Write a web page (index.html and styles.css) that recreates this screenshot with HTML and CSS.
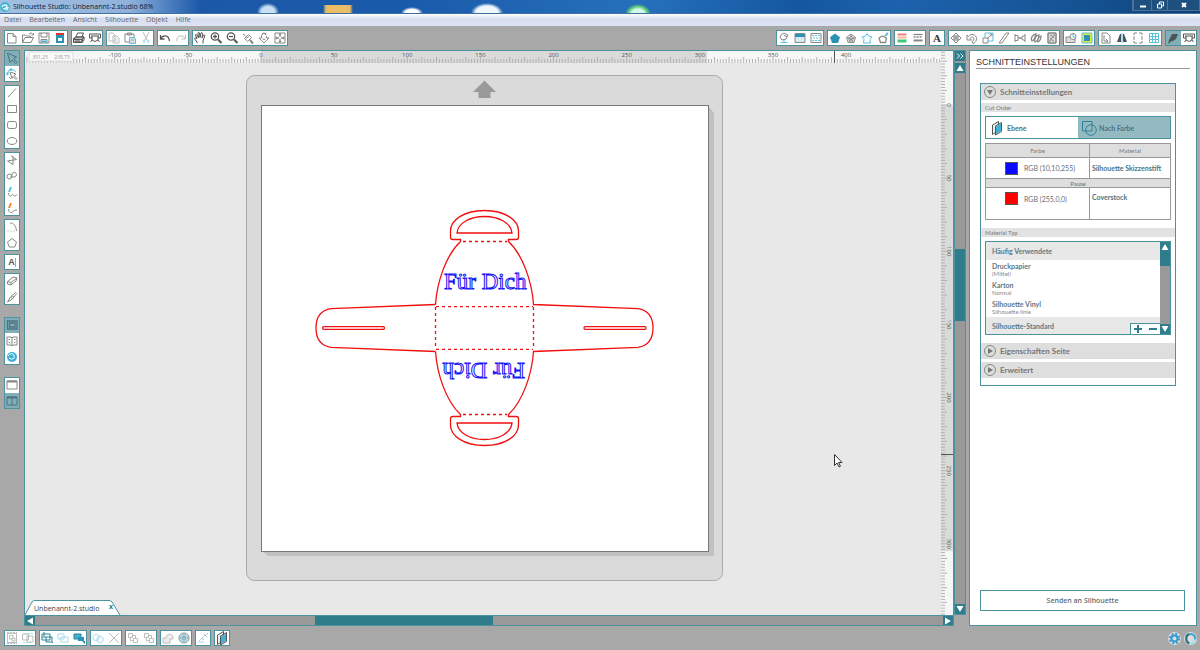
FILE: index.html
```html
<!DOCTYPE html>
<html lang="de">
<head>
    <meta charset="UTF-8">
    <meta name="viewport" content="width=device-width, initial-scale=1.0">
    <title>Silhouette Studio: Unbenannt-2.studio</title>
    <link rel="stylesheet" href="styles.css">
</head>
<body>
    <!-- icon set, 16x16 each -->
    <svg class="sprite" aria-hidden="true">
        <symbol id="new" viewBox="0 0 16 16"><path d="M3.500 3.500h5.500l3 3v6.500H3.500zM9 3.500v3h3"/></symbol>
        <symbol id="open" viewBox="0 0 16 16"><path d="M2.500 12.500V5h3l1 1h4v2M2.500 12.500l2.500-5h8.500l-2.500 5zM9 4c1.500-1.500 3-1 4 .5M13.500 3v2h-2"/></symbol>
        <symbol id="save" viewBox="0 0 16 16"><path d="M3 3h10v10H3zM5 3v4h6V3M5 13V9.500h6V13"/><path class="fill-blue" d="M5.500 10.500h5v2h-5z"/></symbol>
        <symbol id="card" viewBox="0 0 16 16"><path class="fill-teal" d="M4 3h8v10H4z"/><path class="fill-red" d="M4 3h8v2H4z"/><path class="fill-white" d="M6 8h4v3H6z"/></symbol>
        <symbol id="print" viewBox="0 0 16 16"><path class="fill-light" d="M2.500 9l2-2h8.500l-1.500 2.500v2.500h-9z"/><path d="M5 7l1.500-4h6L11 7M2.500 9l2-2h8.500l-2 2.500zM2.500 9.500h8.500v3H2.500zM13 7v3l-2 2.500M4 11h5"/></symbol>
        <symbol id="cutter" viewBox="0 0 16 16"><path d="M2.500 4h11v4H11M2.500 4v4H5M4 6h8M5 6v4l3 1.500 3-1.500V6M11 10l1.500 2M5 10l-1.500 2"/></symbol>
        <symbol id="copy" viewBox="0 0 16 16"><path d="M3 3h4l2 2v6H3zM7 6h4l2 2v5H7z"/><path class="line-blue" d="M8.500 9h3M8.500 11h3"/></symbol>
        <symbol id="paste" viewBox="0 0 16 16"><path d="M3 4h9v3M3 4v8h4M5.500 5V3h4v2z"/><path class="fill-light line-blue" d="M7.500 7.500h5l1 1.500v4.500h-6zM9 10h3"/></symbol>
        <symbol id="scissors" viewBox="0 0 16 16"><path d="M5 2l4 8M11 2L7 10"/><path class="line-blue" d="M7 10a1.500 1.500 0 1 0-1 3zM9 10a1.500 1.500 0 1 1 1 3z"/></symbol>
        <symbol id="undo" viewBox="0 0 16 16"><path class="strong" d="M3.500 5v4h4M3.500 9c2-4 8-5 9 2"/></symbol>
        <symbol id="redo" viewBox="0 0 16 16"><path d="M12.500 5v4h-4M12.500 9c-2-4-8-5-9 2"/></symbol>
        <symbol id="hand" viewBox="0 0 16 16"><path d="M5.500 13L2.500 8.500c0-1 1-1 2.500.5L3.500 5c0-1 1-1 1.500 0l1.500 3-.5-5c.5-1 1.200-.8 1.500 0L8 7.500l1-4.500c.5-.8 1.500-.5 1.500.5L10 8l1.500-3c.7-.6 1.500 0 1.200 1L11 11v2.500"/></symbol>
        <symbol id="zoomin" viewBox="0 0 16 16"><circle class="strong" cx="7" cy="6.500" r="3.700"/><path class="strong" d="M5 6.500h4M7 4.500v4"/><path class="thick" d="M10 9.500l3.500 3.500"/></symbol>
        <symbol id="zoomout" viewBox="0 0 16 16"><circle class="strong" cx="7" cy="6.500" r="3.700"/><path class="strong" d="M5 6.500h4"/><path class="thick" d="M10 9.500l3.500 3.500"/></symbol>
        <symbol id="zoomsel" viewBox="0 0 16 16"><path d="M3 4l2.500 2M4.500 8.500l4-4 3 3-4 4zM6 8.500l3-2"/><path class="thick" d="M10 10l3 3.500"/></symbol>
        <symbol id="zoomdrag" viewBox="0 0 16 16"><path d="M5.500 8V6a3 3 0 0 1 5-2M3 8h2.500M3 8l5 5 5-5h-2.500V6M6 4l2-1 2 2M7 8.500L8 10l1-1.500"/></symbol>
        <symbol id="fit" viewBox="0 0 16 16"><path d="M3 3h10v10H3z"/><path class="strong" d="M8 4v3M8 9v3M4 8h3M9 8h3M7 5l1-1 1 1M7 11l1 1 1-1M5 7L4 8l1 1M11 7l1 1-1 1"/></symbol>

        <symbol id="fillset" viewBox="0 0 16 16"><path d="M5 5l3-2 4 2-2 4-4 1-2-3zM8 5.500l3 1"/><path class="line-blue" d="M8 10v2M4.500 12.500h7"/></symbol>
        <symbol id="gradient" viewBox="0 0 16 16"><path class="fill-pale" d="M3 4h10v8H3z"/><path class="fill-teal" d="M3 4h10v3H3z"/><path d="M3 3.500h10v9H3z"/></symbol>
        <symbol id="pattern" viewBox="0 0 16 16"><path d="M3 3.500h10v9H3z"/><path class="line-blue dotted" d="M4 5.500h8M5 8h7M4 10.500h8"/></symbol>
        <symbol id="pentafill" viewBox="0 0 16 16"><path class="fill-teal" d="M8 3.500l5 3.800-2 5.700H5L3 7.300z"/></symbol>
        <symbol id="pentaline" viewBox="0 0 16 16"><path d="M8 4l4.500 3.500-1.700 5H5.200l-1.700-5zM8 6l2.500 2-1 3h-3l-1-3zM8 4v4M3.500 7.500L8 9l4.500-1.500M5.200 12.500L8 9l2.800 3.500"/></symbol>
        <symbol id="pentablue" viewBox="0 0 16 16"><path class="line-blue" d="M8 3.500l1.500 2.500 3.500 1-2 2.500.5 3.500H4.500L5 9.500 3 7l3.500-1z"/></symbol>
        <symbol id="pentapen" viewBox="0 0 16 16"><path class="strong" d="M7.500 6l4 2-1 4.500h-5L4 8z"/><path class="line-blue thick" d="M10 6l3-3"/></symbol>
        <symbol id="linecolor" viewBox="0 0 16 16"><path class="bar-red" d="M3.500 4.500h9"/><path class="bar-orange" d="M3.500 7.500h9"/><path class="bar-green" d="M3.500 11h9"/></symbol>
        <symbol id="linestyle" viewBox="0 0 16 16"><path class="strong" d="M3.500 4.500h9"/><path class="strong dotted" d="M3.500 7h9"/><path class="thick" d="M3.500 10.500h9"/></symbol>
        <symbol id="move" viewBox="0 0 16 16"><path d="M6 5l2-2 2 2v1H6zM6 11l2 2 2-2v-1H6zM5 6L3 8l2 2h1V6zM11 6l2 2-2 2h-1V6zM7 7h2v2H7z"/></symbol>
        <symbol id="rotate" viewBox="0 0 16 16"><path d="M3 5v5h4.500L6 8.500c1-2 4-2 4 .5 0 2-2 2.500-2 2.500l1 2c5-2 4.500-8 0-9C7.500 4 5.500 5 4.500 6.500z"/></symbol>
        <symbol id="scale" viewBox="0 0 16 16"><path d="M3 8h5v5H3zM8 8l4-4M9.500 4H12v2.500"/><path class="line-blue" d="M5 8V3h8v8H8"/></symbol>
        <symbol id="shear" viewBox="0 0 16 16"><path d="M3 13l7-10h3L6 13z"/></symbol>
        <symbol id="align" viewBox="0 0 16 16"><path d="M3 4v8M3 5.500h3v5H3M13 4v8M13 5.500l-3 1v3l3 1M8 7v2M6 8h4"/></symbol>
        <symbol id="replicate" viewBox="0 0 16 16"><path class="strong" d="M4 11c-2-3 1-7 4-7-1 3-1 6-4 7zM7 12c-1-3 1-7 4-7 0 3-1 6-4 7zM10 12c-1-2 0-5 3-6 0 3-1 5-3 6z"/></symbol>
        <symbol id="nest" viewBox="0 0 16 16"><path class="fill-light" d="M4 3h8v10H4z"/><path d="M4 3h8v10H4zM6 5l4 2-4 2 4 2M10 4v2M6 10v2"/></symbol>
        <symbol id="modify" viewBox="0 0 16 16"><path class="fill-light" d="M3 7h9v5.500H3z"/><circle class="fill-white-line" cx="10" cy="6.500" r="3"/><path class="line-blue" d="M10 4v3h2"/></symbol>
        <symbol id="offset" viewBox="0 0 16 16"><path class="fill-lime" d="M3 3h10v10H3z"/><path class="fill-teal" d="M5 5h6v6H5z"/><path class="line-blue" d="M3 3h10v10H3z"/></symbol>
        <symbol id="page" viewBox="0 0 16 16"><path d="M4 3h5l3 3v7H4zM6 5v6h4M8 9l2 2-2 1"/></symbol>
        <symbol id="mirror" viewBox="0 0 16 16"><path class="fill-dark" d="M3 12l3-8h1v8zM13 12l-3-8H9v8z"/><path class="line-blue" d="M8 3v10"/></symbol>
        <symbol id="marks" viewBox="0 0 16 16"><path d="M4 5V3h3M9 3h3v2M4 11v2h3M9 13h3v-2M4 6v4M12 6v4"/></symbol>
        <symbol id="grid" viewBox="0 0 16 16"><path class="line-blue" d="M3.500 3.500h9v9h-9zM6.500 3.500v9M9.500 3.500v9M3.500 6.500h9M3.500 9.500h9"/></symbol>
        <symbol id="blade" viewBox="0 0 16 16"><path class="fill-dark" d="M4 10l3-6h6l-2 5-3 2-2 .5-3 2.500z"/></symbol>

        <symbol id="arrow" viewBox="0 0 16 16"><path d="M3.500 3l9 4-3 1.500 3.500 4-1.500 1L8 10l-2 2.500z"/></symbol>
        <symbol id="nodes" viewBox="0 0 16 16"><path class="line-blue thick" d="M3 9l1-3M6 4l2-1"/><path class="line-blue" d="M3 8l2-4h5l2 2"/><path d="M6 6l6 2-2 1.500 3 3-1 1-3-3-1 2zM5 11l2 2"/></symbol>
        <symbol id="line" viewBox="0 0 16 16"><path d="M4 12l8-8.500"/></symbol>
        <symbol id="rect" viewBox="0 0 16 16"><path d="M3.500 4.500h9v7h-9z"/></symbol>
        <symbol id="round" viewBox="0 0 16 16"><rect x="3.500" y="4.500" width="9" height="7" rx="2"/></symbol>
        <symbol id="ellipse" viewBox="0 0 16 16"><ellipse cx="8" cy="8" rx="4.800" ry="3.500"/></symbol>
        <symbol id="polygon" viewBox="0 0 16 16"><path d="M7 3.500l5.500 4-9 1.500 5.500 3.500V5"/></symbol>
        <symbol id="curve" viewBox="0 0 16 16"><path d="M8 8a2.500 2.500 0 1 0-2.500 3C8 11 8 8 8 6a2.300 2.300 0 1 1 2.500 3H6"/></symbol>
        <symbol id="freehand" viewBox="0 0 16 16"><path class="line-blue thick" d="M7 3L5 8"/><path d="M4.500 9c0 3 2 4 3 2.500s2-1 2.500 0 2 0 3-1"/></symbol>
        <symbol id="smooth" viewBox="0 0 16 16"><path class="line-orange thick" d="M7 3L5 8"/><path d="M4.500 9c0 4 3 4 4.500 2.500S11 10 13 10"/></symbol>
        <symbol id="arc" viewBox="0 0 16 16"><path d="M6 4c4 0 6 3 6.500 8"/><path class="faint dotted" d="M3 12h9"/></symbol>
        <symbol id="penta" viewBox="0 0 16 16"><path d="M8 3.500l4.500 3.500-1.700 5H5.200L3.500 7z"/></symbol>
        <symbol id="eraser" viewBox="0 0 16 16"><path d="M3.500 8.500L9 4l4 1-1 3-5 4-3.500-1zM3.500 8.500L7 9.500 13 5M7 9.500V12"/></symbol>
        <symbol id="knife" viewBox="0 0 16 16"><path d="M3.500 13l3-5 5-4.500 1 1-4 5.500zM6.500 8l2 1.500M8 7l2 1"/></symbol>
        <symbol id="screen" viewBox="0 0 16 16"><path class="strong" d="M3.500 4h9.500v8H3.500zM5.500 6h5.500v4H5.500z"/></symbol>
        <symbol id="library" viewBox="0 0 16 16"><path d="M3 4h4l1 1 1-1h4v8H9l-1 1-1-1H3zM8 5v8M4.500 6.500H6M10 6.500h1.500M4.500 9l2 1M10 10l1.500-1"/></symbol>
        <symbol id="store" viewBox="0 0 16 16"><circle class="fill-blue" cx="8" cy="8" r="5"/><path class="line-white" d="M4 7c2-3 6-3 6 0M5 9c3 2 6 1 5-2"/></symbol>
        <symbol id="window" viewBox="0 0 16 16"><path d="M3 4h10v8H3z"/><path class="thick" d="M3 4.500h10"/></symbol>
        <symbol id="split" viewBox="0 0 16 16"><path d="M3 4h10v8H3zM8 4v8"/><path class="thick" d="M3 4.500h10"/></symbol>

        <symbol id="group" viewBox="0 0 16 16"><path d="M3.500 3.500h9v9h-9zM5.500 5.500H9V9H5.500zM8 8h3v3H8z"/><path class="dotted thick" d="M3 3h10M3 13h10"/></symbol>
        <symbol id="ungroup" viewBox="0 0 16 16"><path d="M2.500 4h6v6h-6zM7 6h6v6H7z"/><path class="line-blue dotted" d="M5 3.500h8M3 12.500h8"/></symbol>
        <symbol id="selectall" viewBox="0 0 16 16"><path class="line-teal" d="M3 4h8v6H3zM7 7h6v5H7zM5 2v4M3 7h4M13 12l1 1"/></symbol>
        <symbol id="deselect" viewBox="0 0 16 16"><path class="line-blue" d="M3 4h6v5H3zM6 7h7v5H6z"/></symbol>
        <symbol id="selectcolor" viewBox="0 0 16 16"><path class="fill-blue" d="M3 4h7v5H3z"/><path class="line-teal" d="M3 4h7v5H3z"/><path class="fill-teal" d="M7 7h6v4H7zM11 11h3v3z"/></symbol>
        <symbol id="duplicate" viewBox="0 0 16 16"><path class="line-blue" d="M3 6l3-2 3 2v3l-3 2-3-2zM7 8l3-2 3 2v3l-3 2-3-2z"/></symbol>
        <symbol id="delete" viewBox="0 0 16 16"><path d="M3 3l10 10M13 3L3 13"/></symbol>
        <symbol id="front" viewBox="0 0 16 16"><path d="M3.500 3.500h4v4h-4zM8.500 8.500h4v4h-4zM7.500 5.500h3v3M5.500 7.500v3h3"/></symbol>
        <symbol id="weld" viewBox="0 0 16 16"><path class="fill-light" d="M3 8h3c0-5 7-5 7 0v1h-3v4H3z"/></symbol>
        <symbol id="target" viewBox="0 0 16 16"><circle cx="8" cy="8" r="5"/><circle class="line-blue" cx="8" cy="8" r="3.500"/><circle cx="8" cy="8" r="2"/><circle class="fill-blue" cx="8" cy="8" r="1"/></symbol>
        <symbol id="dropper" viewBox="0 0 16 16"><path class="line-blue" d="M3 12h6M4 11l6-6"/><path d="M9 4l3 3M10 6l3-3M6 8l3 2"/></symbol>
        <symbol id="layers" viewBox="0 0 16 16"><path class="paper" d="M3.500 5l6-3.500v9l-6 4z"/><path class="fill-blue" d="M7 6.500l5-3v7.500l-5 3z"/><path class="line-dark" d="M6.500 6l6-3.500v9l-6 3.500z"/></symbol>
        <symbol id="bycolor" viewBox="0 0 16 16"><path class="line-teal" d="M1.500 1.500h9.500v9.500H1.500z"/><circle class="line-teal" cx="10" cy="10" r="5.300"/></symbol>
        <symbol id="logo" viewBox="0 0 16 16"><circle class="fill-logo" cx="8" cy="8" r="8"/><path class="line-white thick" d="M3 8c2-5 8-4 8-1s-5 4-6 4M9 13c3-1 4-3 4-5"/></symbol>
    </svg>

    <header class="titlebar">
        <svg class="logo"><use href="#logo"/></svg>
        <h1 class="title">Silhouette Studio: Unbenannt-2.studio 68%</h1>
        <div class="window-buttons">
            <button class="minimize" aria-label="Minimieren"><svg viewBox="0 0 22 10"><path class="win-thick" d="M8 6.500h6"/></svg></button>
            <button aria-label="Verkleinern"><svg viewBox="0 0 22 10"><path class="win" d="M8.500 4h4v4h-4zM10.500 4V2h4v4h-2"/></svg></button>
            <button class="close" aria-label="Schließen"><svg viewBox="0 0 22 10"><path class="win-thick" d="M9 3l4 4M13 3L9 7"/></svg></button>
        </div>
    </header>

    <nav class="menu">
        <a href="#">Datei</a>
        <a href="#">Bearbeiten</a>
        <a href="#">Ansicht</a>
        <a href="#">Silhouette</a>
        <a href="#">Objekt</a>
        <a href="#">Hilfe</a>
    </nav>

    <div class="toolbar">
        <div class="group">
            <button aria-label="Neu"><svg><use href="#new"/></svg></button>
            <button aria-label="Öffnen"><svg><use href="#open"/></svg></button>
            <button aria-label="Speichern"><svg><use href="#save"/></svg></button>
            <button aria-label="Auf Karte speichern"><svg><use href="#card"/></svg></button>
        </div>
        <div class="group">
            <button aria-label="Drucken"><svg class="dark"><use href="#print"/></svg></button>
            <button aria-label="Schneiden"><svg class="dark"><use href="#cutter"/></svg></button>
        </div>
        <div class="group">
            <button aria-label="Kopieren"><svg class="faded"><use href="#copy"/></svg></button>
            <button aria-label="Einfügen"><svg><use href="#paste"/></svg></button>
            <button aria-label="Ausschneiden"><svg class="faded"><use href="#scissors"/></svg></button>
        </div>
        <div class="group">
            <button aria-label="Rückgängig"><svg class="dark"><use href="#undo"/></svg></button>
            <button aria-label="Wiederholen"><svg class="faded"><use href="#redo"/></svg></button>
        </div>
        <div class="group">
            <button aria-label="Verschieben"><svg class="dark"><use href="#hand"/></svg></button>
            <button aria-label="Vergrößern"><svg class="dark"><use href="#zoomin"/></svg></button>
            <button aria-label="Verkleinern"><svg class="dark"><use href="#zoomout"/></svg></button>
            <button aria-label="Auswahl zoomen"><svg><use href="#zoomsel"/></svg></button>
            <button aria-label="Ziehen und zoomen"><svg><use href="#zoomdrag"/></svg></button>
            <button aria-label="An Fenster anpassen"><svg><use href="#fit"/></svg></button>
        </div>
        <div class="spacer"></div>
        <div class="group">
            <button aria-label="Füllfarbe"><svg><use href="#fillset"/></svg></button>
            <button aria-label="Verlauf"><svg><use href="#gradient"/></svg></button>
            <button aria-label="Muster"><svg><use href="#pattern"/></svg></button>
        </div>
        <div class="group">
            <button aria-label="Füllung"><svg><use href="#pentafill"/></svg></button>
            <button aria-label="Linien"><svg><use href="#pentaline"/></svg></button>
            <button aria-label="Kontur"><svg><use href="#pentablue"/></svg></button>
            <button aria-label="Skizze"><svg><use href="#pentapen"/></svg></button>
        </div>
        <div class="group">
            <button aria-label="Linienfarbe"><svg><use href="#linecolor"/></svg></button>
            <button aria-label="Linienstil"><svg><use href="#linestyle"/></svg></button>
        </div>
        <div class="group">
            <button class="letter">A</button>
        </div>
        <div class="group">
            <button aria-label="Bewegen"><svg><use href="#move"/></svg></button>
            <button aria-label="Drehen"><svg><use href="#rotate"/></svg></button>
            <button aria-label="Skalieren"><svg><use href="#scale"/></svg></button>
            <button aria-label="Scheren"><svg><use href="#shear"/></svg></button>
            <button aria-label="Ausrichten"><svg><use href="#align"/></svg></button>
            <button aria-label="Replizieren"><svg><use href="#replicate"/></svg></button>
            <button aria-label="Verschachteln"><svg><use href="#nest"/></svg></button>
        </div>
        <div class="group">
            <button aria-label="Modifizieren"><svg><use href="#modify"/></svg></button>
            <button aria-label="Offset"><svg><use href="#offset"/></svg></button>
        </div>
        <div class="group">
            <button aria-label="Seite"><svg><use href="#page"/></svg></button>
            <button aria-label="Spiegeln"><svg><use href="#mirror"/></svg></button>
            <button aria-label="Passermarken"><svg><use href="#marks"/></svg></button>
            <button aria-label="Raster"><svg><use href="#grid"/></svg></button>
        </div>
        <div class="group">
            <button class="active" aria-label="Schnitteinstellungen"><svg><use href="#blade"/></svg></button>
            <button aria-label="Senden"><svg class="dark"><use href="#cutter"/></svg></button>
        </div>
    </div>

    <main class="workspace">
        <div class="tools">
            <div class="group">
                <button class="active" aria-label="Auswahl"><svg><use href="#arrow"/></svg></button>
                <button aria-label="Punkte bearbeiten"><svg><use href="#nodes"/></svg></button>
            </div>
            <div class="group">
                <button aria-label="Linie"><svg><use href="#line"/></svg></button>
                <button aria-label="Rechteck"><svg><use href="#rect"/></svg></button>
                <button aria-label="Abgerundetes Rechteck"><svg><use href="#round"/></svg></button>
                <button aria-label="Ellipse"><svg><use href="#ellipse"/></svg></button>
            </div>
            <div class="group">
                <button aria-label="Polygon"><svg><use href="#polygon"/></svg></button>
                <button aria-label="Kurve"><svg><use href="#curve"/></svg></button>
                <button aria-label="Freihand"><svg><use href="#freehand"/></svg></button>
                <button aria-label="Glatte Freihand"><svg><use href="#smooth"/></svg></button>
            </div>
            <div class="group">
                <button aria-label="Bogen"><svg><use href="#arc"/></svg></button>
                <button aria-label="Vieleck"><svg><use href="#penta"/></svg></button>
            </div>
            <div class="group">
                <button class="letter text-tool">A</button>
            </div>
            <div class="group">
                <button aria-label="Radierer"><svg><use href="#eraser"/></svg></button>
                <button aria-label="Messer"><svg><use href="#knife"/></svg></button>
            </div>
            <div class="group apart">
                <button class="active" aria-label="Zeichenfläche"><svg><use href="#screen"/></svg></button>
                <button aria-label="Bibliothek"><svg><use href="#library"/></svg></button>
                <button aria-label="Store"><svg><use href="#store"/></svg></button>
            </div>
            <div class="group apart">
                <button aria-label="Einzelansicht"><svg><use href="#window"/></svg></button>
                <button class="active" aria-label="Geteilte Ansicht"><svg><use href="#split"/></svg></button>
            </div>
        </div>

        <div class="document">
            <svg class="ruler-h" id="ruler-h"></svg>
            <svg class="ruler-v" id="ruler-v"></svg>
            <div class="stage">
                <svg class="canvas">
                    <g transform="translate(-25 -63)">
                        <rect class="mat" x="246.500" y="75.500" width="476" height="505" rx="8"/>
                        <path class="mat-arrow" d="M484.500 80.500L496 92h-5.500v6h-12v-6H473z"/>
                        <path class="page-shadow" d="M708 106l6 7v443H268l-6-5h446z"/>
                        <rect class="page" x="261.500" y="105.500" width="447" height="446"/>
                        <g class="cut">
                            <g id="half">
                                <path d="M435.500 304.500C437 282 446 255 460.500 241.500V239.500H453Q450.500 239.500 450.500 237.500V231C450.500 220 464 210.500 484.500 210.500S518.500 220 518.500 231V237.500Q518.500 239.500 516 239.500H508.500V241.500C523 255 532 282 533.500 304.500L638 308.700Q653 311 653 328"/>
                                <path d="M435.500 304.500L331 308.700Q316 311 316 328"/>
                                <path d="M457 233H512C511 223 499 216.500 484.500 216.500S458 223 457 233z"/>
                                <path class="fold" d="M463 241.500h44M436 306.700h97"/>
                            </g>
                            <use href="#half" transform="matrix(1 0 0 -1 0 656)"/>
                            <path class="fold" d="M435.500 307v42M533.500 307v42"/>
                            <rect x="322.500" y="326.700" width="62" height="2.600" rx="1.300"/>
                            <rect x="584" y="326.700" width="62" height="2.600" rx="1.300"/>
                        </g>
                        <text class="sketch" x="444" y="289">Für Dich</text>
                        <text class="sketch" x="444" y="289" transform="rotate(180 484.500 326)">Für Dich</text>
                        <path class="cursor" d="M834.500 454.500v11l2.500-2.500 2 4 1.500-.8-2-3.700h3.500z"/>
                    </g>
                </svg>
                <div class="tab">
                    <svg class="tab-shape" viewBox="0 0 96 15"><path d="M0 15L7 2Q8 .500 10 .500H84Q86 .500 87 2L95 15"/></svg>
                    <span>Unbenannt-2.studio</span>
                    <button aria-label="Tab schließen">x</button>
                </div>
            </div>
        </div>

        <div class="scroll-v">
            <button class="expand" aria-label="Panel ausblenden"><svg viewBox="0 0 10 10"><path d="M2 2.500L4.500 5 2 7.500M5.500 2.500L8 5 5.500 7.500"/></svg></button>
            <button aria-label="Nach oben"><svg viewBox="0 0 10 10"><path class="tri" d="M5 2l3.500 6h-7z"/></svg></button>
            <div class="track">
                <div class="before"></div>
                <div class="thumb"></div>
                <div class="after"></div>
            </div>
            <button aria-label="Nach unten"><svg viewBox="0 0 10 10"><path class="tri" d="M5 8L1.500 2h7z"/></svg></button>
        </div>

        <div class="scroll-h">
            <button aria-label="Nach links"><svg viewBox="0 0 10 10"><path class="tri" d="M2 5l6-3.500v7z"/></svg></button>
            <div class="track">
                <div class="before"></div>
                <div class="thumb"></div>
                <div class="after"></div>
            </div>
            <button aria-label="Nach rechts"><svg viewBox="0 0 10 10"><path class="tri" d="M8 5L2 1.500v7z"/></svg></button>
        </div>

        <aside class="panel">
            <h2 class="panel-title">SCHNITTEINSTELLUNGEN</h2>
            <div class="settings">
                <button class="fold-head">
                    <svg viewBox="0 0 12 12"><circle cx="6" cy="6" r="5.500"/><path d="M3 4h6L6 9z"/></svg>
                    Schnitteinstellungen
                </button>
                <h3 class="strip">Cut Order</h3>
                <div class="order">
                    <button><svg><use href="#layers"/></svg>Ebene</button>
                    <button class="active"><svg><use href="#bycolor"/></svg>Nach Farbe</button>
                </div>
                <table class="colors">
                    <thead>
                        <tr><th>Farbe</th><th>Material</th></tr>
                    </thead>
                    <tbody>
                        <tr class="first">
                            <td><div class="color"><span class="swatch blue"></span>RGB (10,10,255)</div></td>
                            <td class="material">Silhouette Skizzenstift</td>
                        </tr>
                        <tr class="pause"><td colspan="2">Pause</td></tr>
                        <tr class="second">
                            <td><div class="color"><span class="swatch red"></span>RGB (255,0,0)</div></td>
                            <td class="material">Coverstock</td>
                        </tr>
                    </tbody>
                </table>
                <h3 class="strip">Material Typ</h3>
                <div class="materials">
                    <ul>
                        <li class="head">Häufig Verwendete</li>
                        <li>Druckpapier<small>(Mittel)</small></li>
                        <li>Karton<small>Normal</small></li>
                        <li>Silhouette Vinyl<small>Silhouette linie</small></li>
                        <li class="head">Silhouette-Standard</li>
                    </ul>
                    <div class="list-scroll">
                        <button aria-label="Nach oben"><svg viewBox="0 0 10 10"><path class="tri" d="M5 2l3.500 6h-7z"/></svg></button>
                        <div class="thumb"></div>
                        <button aria-label="Nach unten"><svg viewBox="0 0 10 10"><path class="tri" d="M5 8L1.500 2h7z"/></svg></button>
                    </div>
                    <div class="add-remove">
                        <button aria-label="Hinzufügen"><svg viewBox="0 0 12 10"><path d="M2 5h8M6 1v8"/></svg></button>
                        <button aria-label="Entfernen"><svg viewBox="0 0 12 10"><path d="M2 5h8"/></svg></button>
                    </div>
                </div>
                <button class="fold-head">
                    <svg viewBox="0 0 12 12"><circle cx="6" cy="6" r="5.500"/><path d="M4 3l5 3-5 3z"/></svg>
                    Eigenschaften Seite
                </button>
                <button class="fold-head">
                    <svg viewBox="0 0 12 12"><circle cx="6" cy="6" r="5.500"/><path d="M4 3l5 3-5 3z"/></svg>
                    Erweitert
                </button>
            </div>
            <button class="send">Senden an Silhouette</button>
        </aside>
    </main>

    <footer class="toolbar">
        <div class="group">
            <button aria-label="Gruppieren"><svg class="faded"><use href="#group"/></svg></button>
            <button aria-label="Gruppierung aufheben"><svg class="faded"><use href="#ungroup"/></svg></button>
        </div>
        <div class="group">
            <button aria-label="Alles auswählen"><svg><use href="#selectall"/></svg></button>
            <button aria-label="Auswahl aufheben"><svg class="faded"><use href="#deselect"/></svg></button>
            <button aria-label="Nach Farbe auswählen"><svg><use href="#selectcolor"/></svg></button>
        </div>
        <div class="group">
            <button aria-label="Duplizieren"><svg class="faded"><use href="#duplicate"/></svg></button>
            <button aria-label="Löschen"><svg class="faded"><use href="#delete"/></svg></button>
        </div>
        <div class="group">
            <button aria-label="Nach vorne"><svg class="faded"><use href="#front"/></svg></button>
            <button aria-label="Nach hinten"><svg class="faded"><use href="#front"/></svg></button>
        </div>
        <div class="group">
            <button aria-label="Verschweißen"><svg class="faded"><use href="#weld"/></svg></button>
            <button aria-label="Offset"><svg><use href="#target"/></svg></button>
        </div>
        <div class="group">
            <button aria-label="Pipette"><svg class="faded"><use href="#dropper"/></svg></button>
        </div>
        <div class="group">
            <button aria-label="Ebenen"><svg><use href="#layers"/></svg></button>
        </div>
        <div class="spacer"></div>
        <button class="round-button" aria-label="Einstellungen"><svg viewBox="0 0 12 12"><circle class="halo" cx="6" cy="6" r="6"/><circle class="gear-teeth" cx="6" cy="6" r="4.300"/><circle class="gear" cx="6" cy="6" r="2.800"/></svg></button>
        <button class="round-button" aria-label="Aktualisieren"><svg viewBox="0 0 12 12"><circle class="halo" cx="6" cy="6" r="6"/><path class="swirl-dark" d="M5 10.500C1 9 1 3 5 2"/><path class="swirl" d="M5 2c4-1 6 3 5 5"/><path class="swirl-light" d="M10 7c-.500 2-2.500 4-5 3.500"/></svg></button>
    </footer>

    <script src="ruler.js"></script>
</body>
</html>
```

FILE: ruler.js
```js
const SCALE = 1.4627; // px per mm at 68% zoom
const PAGE = 305;     // page size in mm

function add(svg, name, attrs, text) {
    const el = document.createElementNS('http://www.w3.org/2000/svg', name);
    for (const key in attrs) el.setAttribute(key, attrs[key]);
    if (text !== undefined) el.textContent = text;
    svg.appendChild(el);
}

function drawRuler(id, origin, vertical, marker) {
    const svg = document.getElementById(id);
    const length = vertical ? svg.clientHeight : svg.clientWidth;
    svg.innerHTML = '';

    if (vertical) {
        add(svg, 'rect', { class: 'range', x: 0, y: origin, width: 12, height: PAGE * SCALE });
    } else {
        add(svg, 'rect', { class: 'range', x: origin, y: 0, width: PAGE * SCALE, height: 12 });
    }

    let ticks = '';
    const first = -Math.floor(origin / SCALE / 2) * 2;
    for (let mm = first; origin + mm * SCALE < length; mm += 2) {
        const pos = origin + mm * SCALE;
        const size = mm % 10 === 0 ? 6 : 4;
        ticks += vertical ? `M0 ${pos}h${size}` : `M${pos} 12v${-size}`;
        // no labels under the coordinates box or in the corner
        if (mm % 50 === 0 && pos > 50 && pos < length - 40) {
            if (vertical) {
                add(svg, 'text', { x: pos, y: -6, transform: 'rotate(90)' }, mm);
            } else {
                add(svg, 'text', { x: pos, y: 6 }, mm);
            }
        }
    }
    add(svg, 'path', { class: 'ticks', d: ticks });
    add(svg, 'path', { class: 'marker', d: vertical ? `M0 ${marker}h12` : `M${marker} 0v12` });

    if (!vertical) {
        add(svg, 'rect', { class: 'coords-box', x: 4, y: 1, width: 44, height: 9 });
        add(svg, 'text', { class: 'coords', x: 15, y: 8 }, '391,25');
        add(svg, 'text', { class: 'coords', x: 37, y: 8 }, '238,75');
    }
}

function drawRulers() {
    drawRuler('ruler-h', 236, false, 809.5);
    drawRuler('ruler-v', 54, true, 403.5);
}

window.addEventListener('resize', drawRulers);
drawRulers();
```

FILE: styles.css
```css
* {
    box-sizing: border-box;
}
html, body {
    height: 100%;
}
body {
    margin: 0;
    display: flex;
    flex-direction: column;
    background: #a8a8a8;
    font-family: "Open Sans", "Noto Sans", sans-serif;
    font-size: 7px;
    line-height: 10px;
    color: #667078;
    overflow: hidden;
}
h1, h2, h3, ul {
    margin: 0;
    padding: 0;
    font-size: inherit;
    font-weight: inherit;
    list-style: none;
}
button {
    display: flex;
    align-items: center;
    justify-content: center;
    margin: 0;
    padding: 0;
    border: 0;
    background: none;
    font: inherit;
    color: inherit;
}
svg {
    display: block;
    fill: none;
    stroke: #888;
}
.sprite {
    position: absolute;
    width: 0;
    height: 0;
}

/* icon parts */
.strong { stroke-width: 1.3; }
.thick { stroke-width: 2; }
.dotted { stroke-dasharray: 2 1; }
.faint { stroke: #ccc; }
.line-blue { stroke: #5bbfdf; }
.line-teal { stroke: #2f8295; }
.line-orange { stroke: #f08a1c; }
.line-white { stroke: #fff; }
.line-dark { stroke: #555; }
.fill-blue { fill: #3fb0d6; stroke: none; }
.fill-teal { fill: #2a93b5; stroke: none; }
.fill-logo { fill: #45b4d2; stroke: none; }
.fill-red { fill: #d33; stroke: none; }
.fill-white { fill: #fff; stroke: none; }
.fill-white-line { fill: #fff; }
.fill-light { fill: #ddd; }
.fill-pale { fill: #d5ebf2; stroke: none; }
.fill-lime { fill: #e6ea3c; stroke: none; }
.fill-dark { fill: #4a5458; stroke: none; }
.paper { fill: #eee; stroke: #555; }
.bar-red { stroke: #f08080; stroke-width: 2; }
.bar-orange { stroke: #f5b890; stroke-width: 2; }
.bar-green { stroke: #3cc878; stroke-width: 3; }

/* title bar */
.titlebar {
    height: 14px;
    display: flex;
    align-items: center;
    border-bottom: 1px solid #3f6ea3;
    background:
        linear-gradient(90deg, #a3c0e2 0, #8fb1da 130px, #5284c4 165px, transparent 200px),
        radial-gradient(11px 9px at 268px 12px, #c8e2f4 60%, transparent),
        linear-gradient(90deg, transparent 323px, #e9bd67 326px, #e9bd67 350px, transparent 353px) 0 5px no-repeat,
        radial-gradient(11px 6px at 412px 13px, #fff 60%, transparent),
        radial-gradient(16px 10px at 487px 13px, #eef7fc 70%, transparent),
        radial-gradient(13px 10px at 638px 14px, #d5f7e8 50%, #5dc97a 75%, transparent),
        linear-gradient(90deg, #1c58a8 200px, #1a5aaa 400px, #2670bb 640px, #1457a0 800px, #1c62ac 900px, #14508f 1100px, #0f3f74);
}
.logo {
    width: 10px;
    height: 10px;
    margin-right: 3px;
}
.title {
    flex: 1;
    font-weight: normal;
    color: #10202f;
}
.window-buttons {
    display: flex;
    align-self: flex-start;
    height: 11px;
    border: 1px solid #4f7396;
    border-top: 0;
}
.window-buttons button {
    width: 16px;
    background: #1d4f7f;
    border-left: 1px solid #4f7396;
}
.window-buttons .minimize {
    width: 18px;
}
.window-buttons .close {
    width: 32px;
}
.window-buttons svg {
    width: 22px;
    height: 10px;
    flex: none;
}
.win { stroke: #fff; }
.win-thick { stroke: #fff; stroke-width: 2; }

/* menu */
.menu {
    display: flex;
    gap: 8px;
    height: 12px;
    padding: 0 4px;
    align-items: center;
    background: linear-gradient(#fff, #d6def0 40%, #dde3f2);
}
.menu a {
    color: #666;
    text-decoration: none;
}

/* toolbars */
.toolbar {
    display: flex;
    align-items: center;
    gap: 3px;
    height: 24px;
    padding: 0 3px 0 4px;
}
.group {
    display: flex;
    background: #fff;
    outline: 1px solid #4c939e;
    outline-offset: -1px;
}
.group button {
    width: 16px;
    height: 16px;
}
.group svg {
    width: 16px;
    height: 16px;
}
.group .active {
    background: #82afb7;
}
.active svg { stroke: #4d7383; }
.dark { stroke: #555; }
.faded { opacity: .55; }
.spacer { flex: 1; }
.group .letter {
    font: bold 11px "Liberation Serif", serif;
    color: #333;
}
.group .text-tool {
    font: bold 9px "Liberation Sans", sans-serif;
    color: #555;
}
.text-tool::after {
    content: "";
    height: 9px;
    border-right: 1px solid #5bbfdf;
}

/* workspace */
.workspace {
    flex: 1;
    min-height: 0;
    display: grid;
    grid-template-columns: 24px 1fr 12px 234px;
    grid-template-rows: 1fr 11px;
}
.tools {
    grid-row: 1 / 3;
    padding-left: 4px;
    display: flex;
    flex-direction: column;
    align-items: flex-start;
    gap: 3px;
}
.tools .group {
    flex-direction: column;
}
.tools .apart {
    margin-top: 9px;
}
.document {
    min-width: 0;
    display: grid;
    grid-template-columns: 1fr 12px;
    grid-template-rows: 12px 1fr;
    border: 1px solid #4c939e;
    border-bottom: 0;
    background: #e8e8e8;
}
.ruler-h {
    width: 100%;
    height: 12px;
    background: #f6f6f6;
}
.ruler-v {
    grid-column: 2;
    grid-row: 1 / 3;
    width: 12px;
    height: 100%;
    background: #f6f6f6;
}
.range { fill: #dadada; stroke: none; }
.ticks { stroke: #b2b2b2; }
.marker { stroke: #555; }
.document text {
    text-anchor: middle;
    stroke: none;
    fill: #555;
    font-size: 6px;
}
.coords-box { fill: #fafafa; stroke: #ddd; }
.document .coords {
    fill: #999;
    font-size: 5px;
}
.stage {
    position: relative;
    min-height: 0;
    overflow: hidden;
}
.canvas {
    position: absolute;
    width: 100%;
    height: 100%;
}
.mat { fill: #dadada; stroke: #aaa; }
.mat-arrow { fill: #999; stroke: none; }
.page { fill: #fff; stroke: #777; }
.page-shadow { fill: #c0c0c0; stroke: none; }
.cut { stroke: #f01010; stroke-width: 1.3; }
.fold { stroke-dasharray: 3 3; }
.document .sketch {
    text-anchor: start;
    font-family: "Liberation Serif", serif;
    font-size: 23px;
    fill: #fff;
    stroke: #1414f5;
    stroke-width: 1;
}
.cursor { fill: #fff; stroke: #333; }
.tab {
    position: absolute;
    left: 0;
    bottom: 0;
    width: 96px;
    height: 15px;
    padding: 2px 8px 0 9px;
    display: flex;
    justify-content: space-between;
    align-items: center;
    color: #444;
}
.tab-shape {
    position: absolute;
    left: 0;
    top: 0;
    width: 96px;
    height: 15px;
    fill: #fff;
    stroke: #4c939e;
}
.tab span, .tab button {
    position: relative;
}
.tab button {
    height: 10px;
    align-self: flex-start;
    font-weight: bold;
    color: #2f7c8b;
}

/* scroll bars */
.scroll-v, .scroll-h {
    display: flex;
    background: #999;
    border: 1px solid #4c939e;
}
.scroll-v {
    flex-direction: column;
}
.scroll-h {
    grid-column: 2;
    grid-row: 2;
}
.track {
    flex: 1;
    display: flex;
}
.scroll-v .track {
    flex-direction: column;
}
.scroll-v button, .scroll-h button, .list-scroll button {
    background: #2f7c8b;
}
.scroll-v svg, .scroll-h svg, .list-scroll svg {
    width: 10px;
    height: 10px;
    stroke: #fff;
}
.scroll-h button {
    height: 9px;
}
.scroll-v .expand {
    margin-bottom: 2px;
}
.tri { fill: #fff; stroke: none; }
.thumb { background: #2f7c8b; }
.scroll-h .before { flex: 280; }
.scroll-h .thumb { flex: 179; }
.scroll-h .after { flex: 450; }
.scroll-v .before { flex: 176; }
.scroll-v .thumb { flex: 72; }
.scroll-v .after { flex: 284; }

/* right panel */
.panel {
    grid-column: 4;
    grid-row: 1 / 3;
    margin: 0 3px;
    padding: 4px 6px 14px 6px;
    display: flex;
    flex-direction: column;
    background: #fff;
    border: 1px solid #4c939e;
}
.panel-title {
    height: 14px;
    margin-bottom: 14px;
    border-bottom: 1px solid #999;
    font: 9px/14px "Liberation Sans", sans-serif;
    color: #333;
}
.settings {
    width: 196px;
    margin-left: 4px;
    padding-bottom: 7px;
    border: 1px solid #4c939e;
    font-family: Lato, sans-serif;
}
.fold-head {
    width: 100%;
    height: 16px;
    margin-bottom: 3px;
    padding-left: 3px;
    justify-content: flex-start;
    gap: 4px;
    background: #dedede;
    font-size: 8px;
    font-weight: bold;
    color: #777;
}
.fold-head:last-child {
    margin-bottom: 0;
}
.fold-head svg {
    width: 12px;
    height: 12px;
}
.fold-head path {
    fill: #777;
    stroke: none;
}
.strip {
    height: 9px;
    padding-left: 4px;
    background: #e2e2e2;
    font-family: Lato, sans-serif;
    font-size: 6px;
    line-height: 9px;
    color: #777;
}
.order {
    display: flex;
    margin: 4px;
    border: 1px solid #4c939e;
}
.order button {
    flex: 1;
    height: 21px;
    padding-left: 3px;
    gap: 2px;
    justify-content: flex-start;
    font-weight: bold;
    color: #4d7383;
}
.order .active {
    background: #94bac1;
}
.order svg {
    width: 16px;
    height: 16px;
}
.colors {
    width: 186px;
    margin: 4px 4px 8px;
    border-collapse: collapse;
    table-layout: fixed;
    border: 1px solid #4c939e;
}
.colors th, .colors td {
    padding: 0;
    border: 1px solid #999;
}
.colors th {
    height: 14px;
    background: #dedede;
    font-size: 6px;
    font-weight: normal;
    color: #777;
}
.colors th:first-child {
    width: 104px;
}
.first td {
    height: 21px;
}
.colors .pause td {
    height: 9px;
    background: #dedede;
    font-size: 6px;
    line-height: 7px;
    text-align: center;
}
.colors .second td {
    height: 32px;
    padding-top: 4px;
    vertical-align: top;
}
.color {
    display: flex;
    align-items: center;
    gap: 6px;
    padding-left: 19px;
}
.swatch {
    width: 13px;
    height: 13px;
    border: 1px solid #555;
}
.blue { background: #0a0aff; }
.red { background: #f00; }
.colors .material {
    padding-left: 2px;
    font-weight: bold;
    color: #4d7383;
    white-space: nowrap;
}
.materials {
    position: relative;
    display: flex;
    margin: 4px 4px 8px;
    border: 1px solid #4c939e;
    font-weight: bold;
    color: #5c7886;
}
.materials ul {
    flex: 1;
    height: 92px;
    overflow: hidden;
}
.materials li {
    height: 19px;
    padding: 2px 0 0 6px;
    line-height: 9px;
}
.materials .head {
    height: 18px;
    padding-top: 0;
    line-height: 18px;
    background: #e8e8e8;
}
.materials small {
    display: block;
    font-size: 6px;
    line-height: 6px;
    font-weight: normal;
    color: #888;
}
.list-scroll {
    width: 10px;
    display: flex;
    flex-direction: column;
    background: #999;
}
.list-scroll .thumb {
    height: 14px;
    margin-bottom: auto;
}
.add-remove {
    position: absolute;
    right: 10px;
    bottom: 0;
    width: 30px;
    height: 11px;
    display: flex;
    justify-content: space-around;
    background: #fff;
    border: 1px solid #4c939e;
    border-width: 1px 0 0 1px;
}
.add-remove svg {
    width: 12px;
    height: 10px;
    stroke: #2f7c8b;
    stroke-width: 2;
}
.send {
    height: 21px;
    margin: auto 5px 0 4px;
    border: 1px solid #4c939e;
    font-weight: 600;
    color: #5f6d78;
}

/* bottom right buttons */
.round-button {
    width: 13px;
    height: 13px;
}
.round-button svg {
    width: 13px;
    height: 13px;
}
.halo { fill: #ddd; stroke: none; }
.gear { stroke: #3a9bd0; stroke-width: 2; }
.gear-teeth { stroke: #3a9bd0; stroke-width: 2; stroke-dasharray: 1.7 1.7; }
.swirl { stroke: #35a9d6; stroke-width: 2; }
.swirl-dark { stroke: #2d7482; stroke-width: 2; }
.swirl-light { stroke: #a4dcef; stroke-width: 2; }
```
